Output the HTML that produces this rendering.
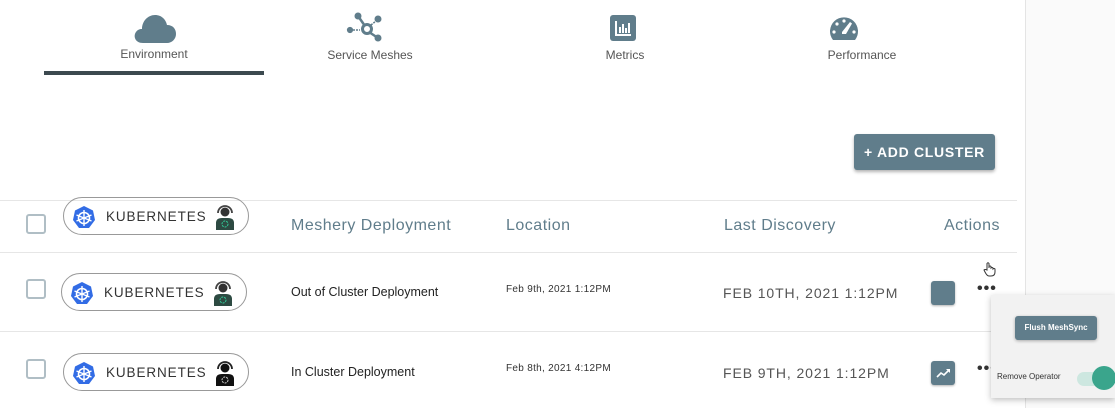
<!DOCTYPE html>
<html><head><style>
*{margin:0;padding:0;box-sizing:border-box}
body{width:1115px;height:408px;background:#fff;font-family:"Liberation Sans",sans-serif;position:relative;overflow:hidden}
.a{position:absolute}
.tab{position:absolute;font-size:12px;color:#555;text-align:center}
.cb{position:absolute;left:26px;width:20px;height:20px;border:2px solid #b0bec5;border-radius:3px}
.pill{position:absolute;height:38px;width:186px;border:1px solid #999;border-radius:19px}
.pill .t{position:absolute;left:42px;top:11px;font-size:13.5px;letter-spacing:0.9px;color:#333}
.hdr{position:absolute;top:217px;font-size:16px;letter-spacing:0.5px;color:#607d8b}
.line{position:absolute;left:0;width:1017px;height:1px;background:#e6e6e6}
.cell{position:absolute;font-size:12.5px;color:#222}
.sm{position:absolute;font-size:10px;color:#333;letter-spacing:0.3px}
.dt{position:absolute;font-size:14px;letter-spacing:0.9px;color:#555}
.dots{position:absolute;font-size:16px;font-weight:bold;color:#333;letter-spacing:1px}
</style></head><body>
<div class="a" style="left:1025px;top:0;width:90px;height:408px;background:#fafafa;border-left:1px solid #e4e4e4"></div>

<svg class="a" style="left:133px;top:12px" width="44" height="32" viewBox="0 0 44 32"><path d="M10 31 C2 31 0 24 3 20 C5 17 8 17 9 17 C9 9 15 3 22 3 C29 3 33 8 34 13 C40 13 43 17 43 22 C43 27 39 31 34 31 Z" fill="#607d8b"/></svg>
<div class="tab" style="left:104px;top:47px;width:100px">Environment</div>
<div class="a" style="left:44px;top:71px;width:220px;height:4px;background:#3c494f"></div>

<svg class="a" style="left:346px;top:12px" width="40" height="32" viewBox="0 0 40 32"><g fill="#607d8b" stroke="#607d8b"><circle cx="12" cy="4" r="3"/><circle cx="32" cy="7" r="3"/><circle cx="4" cy="18" r="2.6"/><circle cx="32" cy="26" r="3"/><line x1="12" y1="4" x2="19" y2="14" stroke-width="2.5"/><line x1="23" y1="20" x2="32" y2="26" stroke-width="2.5"/><line x1="25" y1="13" x2="30" y2="9" stroke-width="1.5" stroke-dasharray="2 1"/><line x1="7" y1="18" x2="14" y2="18" stroke-width="1.5" stroke-dasharray="2 1"/><circle cx="21" cy="17" r="4.5" fill="none" stroke-width="3"/></g></svg>
<div class="tab" style="left:320px;top:48px;width:100px">Service Meshes</div>

<svg class="a" style="left:610px;top:15px" width="26" height="26" viewBox="0 0 26 26"><rect width="26" height="26" rx="3" fill="#607d8b"/><g fill="#fff"><rect x="5" y="19" width="16" height="2"/><rect x="5" y="6" width="2" height="14"/><rect x="9" y="12" width="2" height="6"/><rect x="12" y="9" width="2" height="9"/><rect x="15" y="13" width="2" height="5"/><rect x="18" y="8" width="2" height="10"/></g></svg>
<div class="tab" style="left:575px;top:48px;width:100px">Metrics</div>

<svg class="a" style="left:829px;top:15px" width="30" height="26" viewBox="0 0 30 26"><path d="M4 25 A14 14 0 1 1 26 25 Z" fill="#607d8b"/><g fill="#fff"><circle cx="15" cy="6" r="1.6"/><circle cx="8" cy="9" r="1.6"/><circle cx="5" cy="17" r="1.6"/><circle cx="25" cy="17" r="1.6"/><path d="M21 7 L23 8.5 L17 19 L13 19 L13 17 Z"/></g></svg>
<div class="tab" style="left:812px;top:48px;width:100px">Performance</div>

<div class="a" style="left:854px;top:134px;width:141px;height:36px;background:#607d8b;border-radius:3px;box-shadow:0 2px 3px rgba(0,0,0,.3);color:#fff;font-size:14px;font-weight:bold;letter-spacing:0.7px;line-height:37px;text-align:center">+ ADD CLUSTER</div>

<div class="line" style="top:200px"></div>
<div class="line" style="top:252px"></div>
<div class="line" style="top:331px"></div>

<!-- header row -->
<div class="cb" style="top:214px"></div>
<div class="pill" style="left:63px;top:197px"><svg class="a" style="left:8px;top:7px" width="24" height="24" viewBox="0 0 24 24"><polygon points="12,1 21,5.5 23,15 17,23 7,23 1,15 3,5.5" fill="#326ce5"/><circle cx="12" cy="13" r="5.5" fill="none" stroke="#fff" stroke-width="1.6"/><g stroke="#fff" stroke-width="1.4"><line x1="12" y1="5" x2="12" y2="21"/><line x1="4.5" y1="10" x2="19.5" y2="16"/><line x1="19.5" y1="10" x2="4.5" y2="16"/></g></svg><span class="t">KUBERNETES</span><svg class="a" style="left:150px;top:6px" width="22" height="26" viewBox="0 0 22 26"><circle cx="11" cy="8" r="4.5" fill="#333"/><path d="M4 9 A7 7 0 0 1 18 9" fill="none" stroke="#444" stroke-width="1.8"/><path d="M2 26 L2 19 Q2 14 8 14 L14 14 Q20 14 20 19 L20 26 Z" fill="#2d4a42"/><circle cx="11" cy="20" r="3" fill="none" stroke="#3c9" stroke-width="1" stroke-dasharray="2 1"/></svg></div>
<div class="hdr" style="left:291px">Meshery Deployment</div>
<div class="hdr" style="left:506px">Location</div>
<div class="hdr" style="left:724px">Last Discovery</div>
<div class="hdr" style="left:944px">Actions</div>

<!-- row 1 -->
<div class="cb" style="top:279px"></div>
<div class="pill" style="left:61px;top:273px"><svg class="a" style="left:8px;top:7px" width="24" height="24" viewBox="0 0 24 24"><polygon points="12,1 21,5.5 23,15 17,23 7,23 1,15 3,5.5" fill="#326ce5"/><circle cx="12" cy="13" r="5.5" fill="none" stroke="#fff" stroke-width="1.6"/><g stroke="#fff" stroke-width="1.4"><line x1="12" y1="5" x2="12" y2="21"/><line x1="4.5" y1="10" x2="19.5" y2="16"/><line x1="19.5" y1="10" x2="4.5" y2="16"/></g></svg><span class="t">KUBERNETES</span><svg class="a" style="left:150px;top:6px" width="22" height="26" viewBox="0 0 22 26"><circle cx="11" cy="8" r="4.5" fill="#333"/><path d="M4 9 A7 7 0 0 1 18 9" fill="none" stroke="#444" stroke-width="1.8"/><path d="M2 26 L2 19 Q2 14 8 14 L14 14 Q20 14 20 19 L20 26 Z" fill="#2d4a42"/><circle cx="11" cy="20" r="3" fill="none" stroke="#3c9" stroke-width="1" stroke-dasharray="2 1"/></svg></div>
<div class="cell" style="left:291px;top:285px">Out of Cluster Deployment</div>
<div class="sm" style="left:506px;top:284px">Feb 9th, 2021 1:12PM</div>
<div class="dt" style="left:723px;top:285px">FEB 10TH, 2021 1:12PM</div>
<div class="a" style="left:931px;top:281px;width:24px;height:24px;background:#607d8b;border-radius:3px;box-shadow:0 1px 2px rgba(0,0,0,.3)"></div>
<div class="dots" style="left:977px;top:280px">•••</div>
<svg class="a" style="left:982px;top:261px" width="16" height="16" viewBox="0 0 16 16"><path d="M5 9 L5 2.5 Q6 1 7 2.5 L7 7 L7 5.5 Q8 4.5 9 5.5 L9 7 Q10 6 11 7 L11 8 Q12 7 13 8 L13 11 Q13 15 9 15 L7 15 Q5 15 3 11 L2 9 Q3 8 5 9 Z" fill="#fff" stroke="#333" stroke-width="1"/></svg>

<!-- row 2 -->
<div class="cb" style="top:359px"></div>
<div class="pill" style="left:63px;top:353px"><svg class="a" style="left:8px;top:7px" width="24" height="24" viewBox="0 0 24 24"><polygon points="12,1 21,5.5 23,15 17,23 7,23 1,15 3,5.5" fill="#326ce5"/><circle cx="12" cy="13" r="5.5" fill="none" stroke="#fff" stroke-width="1.6"/><g stroke="#fff" stroke-width="1.4"><line x1="12" y1="5" x2="12" y2="21"/><line x1="4.5" y1="10" x2="19.5" y2="16"/><line x1="19.5" y1="10" x2="4.5" y2="16"/></g></svg><span class="t">KUBERNETES</span><svg class="a" style="left:150px;top:6px" width="22" height="26" viewBox="0 0 22 26"><circle cx="11" cy="8" r="4.5" fill="#111"/><path d="M4 9 A7 7 0 0 1 18 9" fill="none" stroke="#222" stroke-width="1.8"/><path d="M2 26 L2 19 Q2 14 8 14 L14 14 Q20 14 20 19 L20 26 Z" fill="#111"/><circle cx="11" cy="20" r="3" fill="none" stroke="#ccc" stroke-width="1" stroke-dasharray="2 1"/></svg></div>
<div class="cell" style="left:291px;top:365px">In Cluster Deployment</div>
<div class="sm" style="left:506px;top:363px">Feb 8th, 2021 4:12PM</div>
<div class="dt" style="left:723px;top:365px">FEB 9TH, 2021 1:12PM</div>
<div class="a" style="left:931px;top:361px;width:24px;height:24px;background:#607d8b;border-radius:3px;box-shadow:0 1px 2px rgba(0,0,0,.3)"><svg width="24" height="24"><polyline points="6,16 10,12 13,14 18,9" fill="none" stroke="#fff" stroke-width="1.6"/><polygon points="15,8 19,8 19,12" fill="#fff"/></svg></div>
<div class="dots" style="left:977px;top:360px">•••</div>

<!-- popup -->
<div class="a" style="left:991px;top:295px;width:124px;height:103px;background:#f2f2f2;box-shadow:0 2px 6px rgba(0,0,0,.25)">
<div class="a" style="left:24px;top:21px;width:82px;height:24px;background:#607d8b;border-radius:3px;box-shadow:0 1px 3px rgba(0,0,0,.3);color:#fff;font-size:8px;font-weight:bold;line-height:24px;text-align:center">Flush MeshSync</div>
<div class="a" style="left:6px;top:77px;font-size:8px;color:#333">Remove Operator</div>
<div class="a" style="left:86px;top:77px;width:26px;height:14px;border-radius:7px;background:#cde7e0"></div>
<div class="a" style="left:101px;top:71px;width:24px;height:24px;border-radius:12px;background:#3aa58c"></div>
</div>
</body></html>
